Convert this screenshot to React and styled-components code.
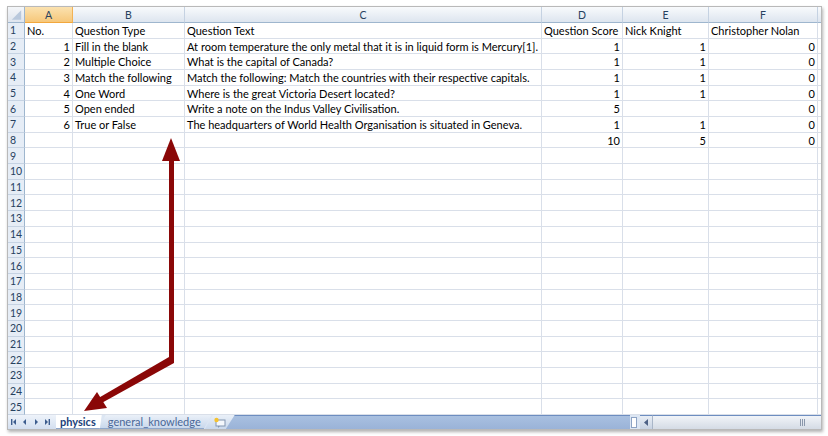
import React from "react";
import styled, {createGlobalStyle} from "styled-components";

const GlobalStyle = createGlobalStyle`
  *, *::before, *::after {
    box-sizing: border-box;
  }
  body {
    margin: 0;
    background: #ffffff;
    font-family: Lato, "Liberation Sans", sans-serif;
  }
`;

const columns = [
    {key: 'A', width: 48},
    {key: 'B', width: 112},
    {key: 'C', width: 357},
    {key: 'D', width: 81},
    {key: 'E', width: 86},
    {key: 'F', width: 109},
];

const data = [
    ['No.', 'Question Type', 'Question Text', 'Question Score', 'Nick Knight', 'Christopher Nolan'],
    [1, 'Fill in the blank', 'At room temperature the only metal that it is in liquid form is Mercury[1].', 1, 1, 0],
    [2, 'Multiple Choice', 'What is the capital of Canada?', 1, 1, 0],
    [3, 'Match the following', 'Match the following: Match the countries with their respective capitals.', 1, 1, 0],
    [4, 'One Word', 'Where is the great Victoria Desert located?', 1, 1, 0],
    [5, 'Open ended', 'Write a note on the Indus Valley Civilisation.', 5, '', 0],
    [6, 'True or False', 'The headquarters of World Health Organisation is situated in Geneva.', 1, 1, 0],
    ['', '', '', 10, 5, 0],
];

const ROWS = 25;

const App = () => {
    const rows = [];
    for (let r = 0; r < ROWS; r++) {
        rows.push(data[r] || ['', '', '', '', '', '']);
    }

    return (
        <Page>
            <GlobalStyle/>
            <Frame>
                <Sheet>
                    <Corner>
                        <svg width="17" height="16" viewBox="0 0 17 16">
                            <polygon points="14,3 14,13 4,13" fill="#b9c8dc"/>
                        </svg>
                    </Corner>
                    {columns.map((c) => (
                        <ColHead key={c.key} $active={c.key === 'A'}>{c.key}</ColHead>
                    ))}
                    <ColHead/>
                    {rows.map((row, i) => (
                        <React.Fragment key={i}>
                            <RowHead>{i + 1}</RowHead>
                            {row.map((v, j) => (
                                <Cell key={j} $num={typeof v === 'number'}>{v}</Cell>
                            ))}
                            <Cell/>
                        </React.Fragment>
                    ))}
                </Sheet>
                <TabBar>
                    <NavButtons>
                        <svg width="44" height="8" viewBox="0 0 44 8">
                            <rect x="1" y="1" width="1.4" height="6" fill="#3d5d8e"/>
                            <polygon points="6,1 6,7 3,4" fill="#3d5d8e"/>
                            <polygon points="16,1 16,7 13,4" fill="#3d5d8e"/>
                            <polygon points="25,1 25,7 28,4" fill="#3d5d8e"/>
                            <polygon points="35,1 35,7 38,4" fill="#3d5d8e"/>
                            <rect x="38.6" y="1" width="1.4" height="6" fill="#3d5d8e"/>
                        </svg>
                    </NavButtons>
                    <Tab $active>physics</Tab>
                    <Tab>general_knowledge</Tab>
                    <NewTab>
                        <svg width="14" height="11" viewBox="0 0 14 11">
                            <rect x="3" y="3" width="9" height="6" fill="#f4f7fb" stroke="#8295b0" strokeWidth="1"/>
                            <polygon points="5,9 5,11 7,9" fill="#8295b0"/>
                            <circle cx="3.5" cy="3" r="2.2" fill="#f5c230"/>
                        </svg>
                    </NewTab>
                    <Filler/>
                    <Splitter/>
                    <ScrollButton>
                        <svg width="5" height="7" viewBox="0 0 5 7">
                            <polygon points="4,0 4,7 0,3.5" fill="#4d6185"/>
                        </svg>
                    </ScrollButton>
                    <ScrollTrack>
                        <Grip>
                            <span/><span/><span/>
                        </Grip>
                    </ScrollTrack>
                </TabBar>
                <Arrows width="814" height="422" viewBox="0 0 814 422">
                    <g fill="#8a0707">
                        <polygon points="163,131 154,154 172,154"/>
                        <rect x="161" y="152" width="5" height="201"/>
                        <polygon points="161,350 166,350 166,356 90,398 87,393"/>
                        <polygon points="76,404 89,385 99,401"/>
                    </g>
                </Arrows>
            </Frame>
        </Page>
    )
}

export default App;

const Page = styled.div`
  width: 828px;
  height: 436px;
  padding: 6px 0 0 7px;
`;
const Frame = styled.div`
  position: relative;
  width: 815px;
  height: 424px;
  border: 1px solid #b9b9b9;
  box-shadow: 1px 2px 3px rgba(0, 0, 0, 0.3);
  display: flex;
  flex-direction: column;
  overflow: hidden;
  background: #ffffff;
`;
const Sheet = styled.div`
  display: grid;
  grid-template-columns: 17px 48px 112px 357px 81px 86px 109px 1fr;
  grid-template-rows: 16px repeat(25, 1fr);
  height: 408px;
  font-size: 11px;
  color: #000000;
`;
const Corner = styled.div`
  background: linear-gradient(#f4f6f9, #dfe5ee);
  border-right: 1px solid #9eb6ce;
  border-bottom: 1px solid #9eb6ce;
  display: flex;
`;
const ColHead = styled.div`
  background: ${p => p.$active
    ? 'linear-gradient(#fbe2b0, #f6c77a)'
    : 'linear-gradient(#f8fafc, #dde5ef)'};
  border-right: 1px solid ${p => p.$active ? '#f2b255' : '#c5d2e2'};
  border-bottom: 1px solid ${p => p.$active ? '#f2a73c' : '#9eb6ce'};
  color: #27415f;
  display: flex;
  align-items: center;
  justify-content: center;
  font-size: 10.5px;
`;
const RowHead = styled.div`
  background: #e6edf6;
  border-right: 1px solid #9eb6ce;
  border-bottom: 1px solid #c6d3e3;
  color: #27415f;
  font-size: 10.5px;
  display: flex;
  align-items: center;
  padding-left: 2px;
`;
const Cell = styled.div`
  border-right: 1px solid #d9dfe9;
  border-bottom: 1px solid #d9dfe9;
  display: flex;
  align-items: center;
  justify-content: ${p => p.$num ? 'flex-end' : 'flex-start'};
  padding: 0 2px;
  white-space: nowrap;
  overflow: hidden;
`;
const TabBar = styled.div`
  flex: 1;
  display: flex;
  align-items: stretch;
  background: #dce6f3;
  font-size: 11px;
`;
const NavButtons = styled.div`
  width: 48px;
  display: flex;
  align-items: center;
  padding-left: 2px;
  background: linear-gradient(#eef3fa, #d3dff0);
`;
const Tab = styled.div`
  display: flex;
  align-items: center;
  justify-content: center;
  margin-left: ${p => p.$active ? '0' : '-4px'};
  padding: ${p => p.$active ? '0 6px 0 4px' : '0 11px 0 10px'};
  background: ${p => p.$active ? '#ffffff' : 'linear-gradient(#eaf0f8, #c9d8ec)'};
  color: ${p => p.$active ? '#1b3f7a' : '#4a6797'};
  font-weight: ${p => p.$active ? 'bold' : 'normal'};
  clip-path: ${p => p.$active
    ? 'polygon(0 0, 100% 0, calc(100% - 2px) 100%, 0 100%)'
    : 'polygon(8px 0, 100% 0, calc(100% - 8px) 100%, 0 100%)'};
  border-bottom: 1px solid #8ea7cc;
  z-index: ${p => p.$active ? 2 : 1};
`;
const NewTab = styled.div`
  width: 30px;
  margin-left: -7px;
  display: flex;
  align-items: center;
  justify-content: center;
  background: linear-gradient(#eaf0f8, #c9d8ec);
  clip-path: polygon(8px 0, 100% 0, calc(100% - 9px) 100%, 0 100%);
`;
const Filler = styled.div`
  flex: 1;
  margin-left: -9px;
  background: linear-gradient(#a9c0e0, #9ab3d8);
  border-top: 1px solid #6d8dc0;
  clip-path: polygon(9px 0, 100% 0, 100% 100%, 0 100%);
`;
const Splitter = styled.div`
  width: 6px;
  margin: 2px 3px 1px 1px;
  background: #ffffff;
  border: 1px solid #8da3c4;
`;
const ScrollButton = styled.div`
  width: 12px;
  display: flex;
  align-items: center;
  justify-content: center;
  background: linear-gradient(#e9eef5, #c7d2e2);
  border-top: 1px solid #6d8dc0;
`;
const ScrollTrack = styled.div`
  width: 169px;
  display: flex;
  align-items: center;
  justify-content: flex-end;
  padding-right: 16px;
  background: linear-gradient(#f1f4f8, #d4dbe5);
  border-top: 1px solid #6d8dc0;
  border-left: 1px solid #a9b6c8;
`;
const Grip = styled.div`
  display: flex;
  gap: 1px;

  span {
    width: 1px;
    height: 7px;
    background: #8a97ab;
  }
`;
const Arrows = styled.svg`
  position: absolute;
  left: 0;
  top: 0;
  pointer-events: none;
  overflow: visible;
`;
